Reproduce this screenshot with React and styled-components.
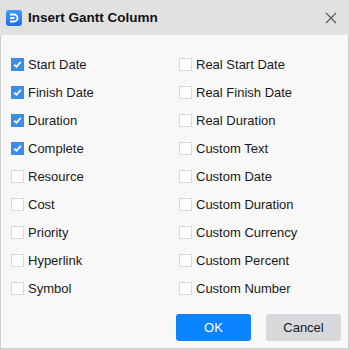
import React, { useState } from 'react';
import styled, { createGlobalStyle } from 'styled-components';

const GlobalStyle = createGlobalStyle`
  html, body {
    margin: 0;
    padding: 0;
    background: #ffffff;
  }
  body {
    font-family: "Liberation Sans", Arial, sans-serif;
  }
`;

const Dialog = styled.div`
  width: 349px;
  height: 349px;
  box-sizing: border-box;
  border: 1px solid #cfcfcf;
  border-top: none;
  background: #f8f8f8;
  display: flex;
  flex-direction: column;
`;

const Header = styled.div`
  height: 35px;
  background: #e1e1e1;
  display: flex;
  align-items: center;
  padding: 0 10px 0 6px;
  gap: 6px;
  margin: 0 -1px;
`;

const Title = styled.h1`
  flex: 1;
  margin: 0;
  font-size: 13.5px;
  font-weight: 700;
  color: #111;
`;

const CloseButton = styled.button`
  border: none;
  background: none;
  padding: 0;
  width: 16px;
  height: 16px;
  display: flex;
  align-items: center;
  justify-content: center;
`;

const Body = styled.div`
  flex: 1;
  display: flex;
  flex-direction: column;
  padding: 15px 0 0 10px;
`;

const Grid = styled.div`
  display: grid;
  grid-template-columns: 168px 1fr;
  grid-auto-rows: 28px;
`;

const Option = styled.label`
  display: flex;
  align-items: center;
  gap: 4px;
  font-size: 13px;
  color: #1a1a1a;
  cursor: pointer;
`;

const Box = styled.span`
  width: 13px;
  height: 13px;
  box-sizing: border-box;
  display: flex;
  align-items: center;
  justify-content: center;
  background: ${(p) => (p.$checked ? '#3a8ee6' : '#ffffff')};
  border: 1px solid ${(p) => (p.$checked ? '#3a8ee6' : '#dadada')};
`;

const Footer = styled.div`
  display: flex;
  justify-content: flex-end;
  gap: 15px;
  padding: 12px 7px 0 0;
`;

const Button = styled.button`
  width: 75px;
  height: 27px;
  border: none;
  border-radius: 3px;
  font-family: inherit;
  font-size: 13px;
  background: ${(p) => (p.$primary ? '#0a84ff' : '#d7d8db')};
  color: ${(p) => (p.$primary ? '#ffffff' : '#1a1a1a')};
`;

const left = ['Start Date', 'Finish Date', 'Duration', 'Complete', 'Resource', 'Cost', 'Priority', 'Hyperlink', 'Symbol'];
const right = ['Real Start Date', 'Real Finish Date', 'Real Duration', 'Custom Text', 'Custom Date', 'Custom Duration', 'Custom Currency', 'Custom Percent', 'Custom Number'];

const Logo = () => (
  <svg width="16" height="16" viewBox="0 0 16 16">
    <defs>
      <linearGradient id="lg" x1="0" y1="0" x2="0" y2="1">
        <stop offset="0" stopColor="#3d9bff" />
        <stop offset="1" stopColor="#1f6fe8" />
      </linearGradient>
    </defs>
    <rect width="16" height="16" rx="3" fill="url(#lg)" />
    <path d="M4 4.5h4a3.5 3.5 0 0 1 0 7H4" fill="none" stroke="#fff" strokeWidth="1.8" />
    <path d="M4 8h4.5" stroke="#fff" strokeWidth="1.8" />
  </svg>
);

const Check = () => (
  <svg width="9" height="9" viewBox="0 0 9 9">
    <path d="M1.2 4.6l2.2 2.2 4.4-5" fill="none" stroke="#fff" strokeWidth="1.8" />
  </svg>
);

const App = () => {
  const [checked, setChecked] = useState({
    'Start Date': true,
    'Finish Date': true,
    Duration: true,
    Complete: true,
  });

  const toggle = (name) => setChecked((c) => ({ ...c, [name]: !c[name] }));

  const items = [];
  left.forEach((l, i) => {
    items.push(l, right[i]);
  });

  return (
    <>
      <GlobalStyle />
      <Dialog>
        <Header>
          <Logo />
          <Title>Insert Gantt Column</Title>
          <CloseButton aria-label="Close">
            <svg width="12" height="12" viewBox="0 0 12 12">
              <path d="M1 1l10 10M11 1L1 11" stroke="#555" strokeWidth="1.1" />
            </svg>
          </CloseButton>
        </Header>
        <Body>
          <Grid>
            {items.map((name) => (
              <Option key={name} onClick={() => toggle(name)}>
                <Box $checked={!!checked[name]}>{checked[name] && <Check />}</Box>
                {name}
              </Option>
            ))}
          </Grid>
          <Footer>
            <Button $primary>OK</Button>
            <Button>Cancel</Button>
          </Footer>
        </Body>
      </Dialog>
    </>
  );
};

export default App;
